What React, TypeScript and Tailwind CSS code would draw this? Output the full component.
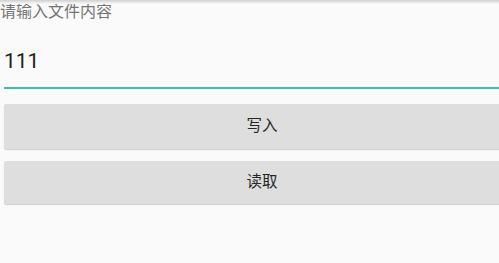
import React from 'react';

const font = { fontFamily: '"Roboto", "Noto Sans CJK SC", sans-serif' };

export default function App() {
    return (
        <div className="relative h-[263px] w-[499px] overflow-hidden bg-[#fafafa]" style={font}>
            {/* status bar shadow */}
            <div className="absolute left-0 right-0 top-0 h-[4px] bg-gradient-to-b from-[#d0d0d0] to-[#fafafa]" />
            <div className="flex w-[524px] flex-col">
                <div className="pt-[1px] text-[16px] leading-[22px] text-[#757575]">请输入文件内容</div>
                <div className="ml-[4px] mr-[4px] mt-[24px] border-b-2 border-[#3dbfae] pb-[12px] text-[21px] leading-[28px] text-[#212121]">
                    111
                </div>
                <div className="mx-[4px] mt-[15px] flex flex-col gap-[12px]">
                    <button className="h-[45px] rounded-[2px] bg-[#dddedd] text-[15.5px] text-[#262626] shadow-[0_1px_1px_rgba(0,0,0,0.18)]">
                        写入
                    </button>
                    <button className="h-[43px] rounded-[2px] bg-[#dddedd] text-[15.5px] text-[#262626] shadow-[0_1px_1px_rgba(0,0,0,0.18)]">
                        读取
                    </button>
                </div>
            </div>
        </div>
    );
}
